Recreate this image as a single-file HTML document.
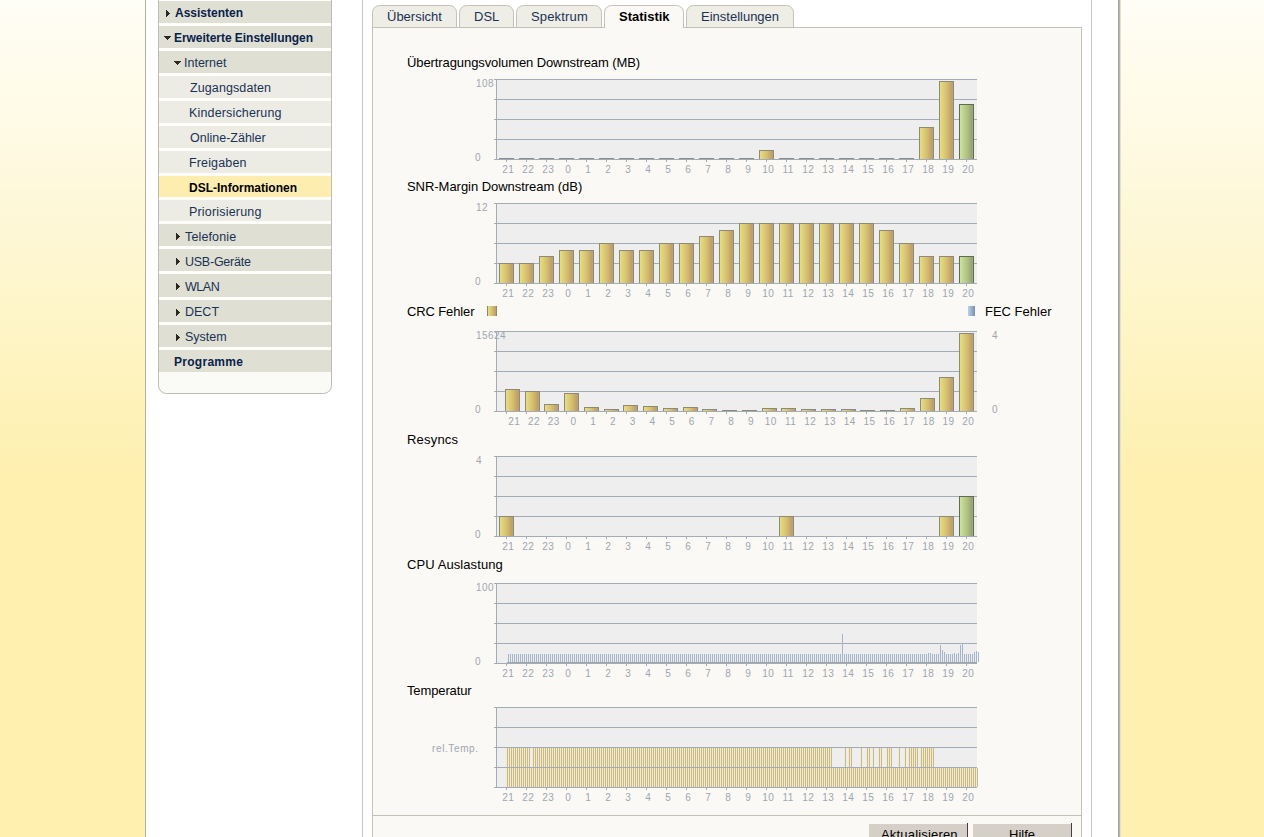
<!DOCTYPE html>
<html><head><meta charset="utf-8"><style>
html,body{margin:0;padding:0;width:1264px;height:837px;overflow:hidden;}
body{background:linear-gradient(to bottom,#fffef6 0px,#fef8da 200px,#fef3bc 390px,#fff0b0 470px,#fff0b0 837px);font-family:'Liberation Sans', sans-serif;}
svg{position:absolute;left:0;top:0;font-family:'Liberation Sans', sans-serif;}
</style></head><body>
<svg width="1264" height="837" viewBox="0 0 1264 837" shape-rendering="crispEdges">
<defs><linearGradient id="gy" x1="0" x2="1" y1="0" y2="0"><stop offset="0" stop-color="#e7de80"/><stop offset="0.55" stop-color="#d3bd70"/><stop offset="0.88" stop-color="#c2a066"/><stop offset="1" stop-color="#b6a482"/></linearGradient><linearGradient id="gg" x1="0" x2="1" y1="0" y2="0"><stop offset="0" stop-color="#cde39c"/><stop offset="0.6" stop-color="#afbe84"/><stop offset="0.9" stop-color="#98a46e"/><stop offset="1" stop-color="#a0ac8c"/></linearGradient><linearGradient id="gb" x1="0" x2="1" y1="0" y2="0"><stop offset="0" stop-color="#bcd0ea"/><stop offset="1" stop-color="#7890b4"/></linearGradient><pattern id="pt" x="0" y="0" width="2" height="10" patternUnits="userSpaceOnUse"><rect x="0" y="0" width="2" height="10" fill="#f6edc6"/><rect x="1" y="0" width="1" height="10" fill="#c6b98f"/></pattern></defs>
<rect x="145" y="0" width="975" height="837" fill="#ffffff"/>
<rect x="145" y="0" width="1" height="837" fill="#b4b09e"/>
<rect x="1118" y="0" width="1" height="837" fill="#a2a29e"/>
<rect x="1119" y="0" width="1" height="837" fill="#b6b6ac"/>
<rect x="1120" y="0" width="1" height="837" fill="#e6e0c8"/>
<path shape-rendering="geometricPrecision" d="M158.5,-5 L158.5,385.5 A8,8 0 0 0 166.5,393.5 L323.5,393.5 A8,8 0 0 0 331.5,385.5 L331.5,-5" fill="#fafaf6" stroke="#bcbcb4" stroke-width="1"/>
<rect x="159" y="0" width="172" height="375" fill="#fefefa"/>
<rect x="159" y="1" width="172" height="22" fill="#e0dfd3"/>
<rect x="159" y="26" width="172" height="22" fill="#e0dfd3"/>
<rect x="159" y="51" width="172" height="22" fill="#e0dfd3"/>
<rect x="159" y="76" width="172" height="22" fill="#ecebe4"/>
<rect x="159" y="101" width="172" height="22" fill="#ecebe4"/>
<rect x="159" y="126" width="172" height="22" fill="#ecebe4"/>
<rect x="159" y="151" width="172" height="22" fill="#ecebe4"/>
<rect x="159" y="176" width="172" height="21" fill="#fdeeb0"/>
<rect x="159" y="200" width="172" height="21" fill="#ecebe4"/>
<rect x="159" y="224" width="172" height="22" fill="#e0dfd3"/>
<rect x="159" y="249" width="172" height="22" fill="#e0dfd3"/>
<rect x="159" y="274" width="172" height="23" fill="#e0dfd3"/>
<rect x="159" y="300" width="172" height="22" fill="#e0dfd3"/>
<rect x="159" y="325" width="172" height="22" fill="#e0dfd3"/>
<rect x="159" y="350" width="172" height="22" fill="#e0dfd3"/>
<rect x="159" y="372" width="172" height="12" fill="#fafaf6"/>
<path d="M166,10 L170,13.5 L166,17 Z" fill="#2a2a22"/>
<text x="175" y="17" font-size="12" font-weight="bold" fill="#08224a" textLength="68.03" lengthAdjust="spacing">Assistenten</text>
<path d="M164,36 L171,36 L167.5,40 Z" fill="#2a2a22"/>
<text x="174" y="42" font-size="12" font-weight="bold" fill="#08224a" textLength="139.0" lengthAdjust="spacing">Erweiterte Einstellungen</text>
<path d="M174,61 L181,61 L177.5,65 Z" fill="#2a2a22"/>
<text x="184" y="67" font-size="12.5" fill="#1a3254" textLength="42.39" lengthAdjust="spacing">Internet</text>
<text x="190" y="92" font-size="12.5" fill="#1a3254" textLength="81.03" lengthAdjust="spacing">Zugangsdaten</text>
<text x="189" y="117" font-size="12.5" fill="#1a3254" textLength="92.49" lengthAdjust="spacing">Kindersicherung</text>
<text x="190" y="142" font-size="12.5" fill="#1a3254" textLength="75.73" lengthAdjust="spacing">Online-Zähler</text>
<text x="189" y="167" font-size="12.5" fill="#1a3254" textLength="57.42" lengthAdjust="spacing">Freigaben</text>
<text x="189" y="192" font-size="12" font-weight="bold" fill="#000000" textLength="108.0" lengthAdjust="spacing">DSL-Informationen</text>
<text x="189" y="216" font-size="12.5" fill="#1a3254" textLength="72.34" lengthAdjust="spacing">Priorisierung</text>
<path d="M176,233 L180,236.5 L176,240 Z" fill="#2a2a22"/>
<text x="185" y="241" font-size="12.5" fill="#1a3254" textLength="51.17" lengthAdjust="spacing">Telefonie</text>
<path d="M176,258 L180,261.5 L176,265 Z" fill="#2a2a22"/>
<text x="185" y="266" font-size="12.5" fill="#1a3254" textLength="65.87" lengthAdjust="spacing">USB-Geräte</text>
<path d="M176,283 L180,286.5 L176,290 Z" fill="#2a2a22"/>
<text x="185" y="291" font-size="12.5" fill="#1a3254" textLength="34.79" lengthAdjust="spacing">WLAN</text>
<path d="M176,309 L180,312.5 L176,316 Z" fill="#2a2a22"/>
<text x="185" y="316" font-size="12.5" fill="#1a3254" textLength="34.03" lengthAdjust="spacing">DECT</text>
<path d="M176,334 L180,337.5 L176,341 Z" fill="#2a2a22"/>
<text x="185" y="341" font-size="12.5" fill="#1a3254" textLength="41.69" lengthAdjust="spacing">System</text>
<text x="174" y="366" font-size="12" font-weight="bold" fill="#08224a" textLength="68.95" lengthAdjust="spacing">Programme</text>
<rect x="362" y="0" width="1" height="837" fill="#c8c8c4"/>
<rect x="1091" y="0" width="1" height="837" fill="#c8c8c4"/>
<rect x="372.5" y="27.5" width="709" height="900" fill="#faf9f5" stroke="#c4c2b8" stroke-width="1"/>
<rect x="373" y="815" width="708" height="1" fill="#c4c2b8"/>
<path shape-rendering="geometricPrecision" d="M372.5,28 L372.5,12.5 A7,7 0 0 1 379.5,5.5 L449.5,5.5 A7,7 0 0 1 456.5,12.5 L456.5,28" fill="#eeede6" stroke="#c4c2b8" stroke-width="1"/>
<text x="387" y="21" font-size="13" fill="#1a3254" textLength="54.92" lengthAdjust="spacing">Übersicht</text>
<path shape-rendering="geometricPrecision" d="M459.5,28 L459.5,12.5 A7,7 0 0 1 466.5,5.5 L506.5,5.5 A7,7 0 0 1 513.5,12.5 L513.5,28" fill="#eeede6" stroke="#c4c2b8" stroke-width="1"/>
<text x="474" y="21" font-size="13" fill="#1a3254" textLength="25.3" lengthAdjust="spacing">DSL</text>
<path shape-rendering="geometricPrecision" d="M516.5,28 L516.5,12.5 A7,7 0 0 1 523.5,5.5 L594.5,5.5 A7,7 0 0 1 601.5,12.5 L601.5,28" fill="#eeede6" stroke="#c4c2b8" stroke-width="1"/>
<text x="531" y="21" font-size="13" fill="#1a3254" textLength="56.78" lengthAdjust="spacing">Spektrum</text>
<path shape-rendering="geometricPrecision" d="M604.5,28 L604.5,12.5 A7,7 0 0 1 611.5,5.5 L676.5,5.5 A7,7 0 0 1 683.5,12.5 L683.5,28" fill="#faf9f5" stroke="#c4c2b8" stroke-width="1"/>
<text x="619" y="21" font-size="13" font-weight="bold" fill="#000" textLength="50.58" lengthAdjust="spacing">Statistik</text>
<path shape-rendering="geometricPrecision" d="M686.5,28 L686.5,12.5 A7,7 0 0 1 693.5,5.5 L786.5,5.5 A7,7 0 0 1 793.5,12.5 L793.5,28" fill="#eeede6" stroke="#c4c2b8" stroke-width="1"/>
<text x="701" y="21" font-size="13" fill="#1a3254" textLength="78.06" lengthAdjust="spacing">Einstellungen</text>
<rect x="373" y="27" width="231" height="1" fill="#c4c2b8"/>
<rect x="684" y="27" width="397" height="1" fill="#c4c2b8"/>
<rect x="605" y="28" width="78" height="3" fill="#faf9f5"/>
<text x="407" y="67" font-size="13" fill="#000" textLength="233.18" lengthAdjust="spacing">Übertragungsvolumen Downstream (MB)</text>
<rect x="497" y="80" width="480" height="79" fill="#eeeeee"/>
<rect x="494" y="79" width="483" height="1" fill="#a2abb6"/>
<rect x="494" y="99" width="483" height="1" fill="#a2abb6"/>
<rect x="494" y="119" width="483" height="1" fill="#a2abb6"/>
<rect x="494" y="139" width="483" height="1" fill="#a2abb6"/>
<rect x="494" y="159" width="483" height="1" fill="#a2abb6"/>
<rect x="496" y="79" width="1" height="81" fill="#a2abb6"/>
<rect x="506" y="160" width="1" height="2" fill="#a2abb6"/>
<rect x="526" y="160" width="1" height="2" fill="#a2abb6"/>
<rect x="546" y="160" width="1" height="2" fill="#a2abb6"/>
<rect x="566" y="160" width="1" height="2" fill="#a2abb6"/>
<rect x="586" y="160" width="1" height="2" fill="#a2abb6"/>
<rect x="606" y="160" width="1" height="2" fill="#a2abb6"/>
<rect x="626" y="160" width="1" height="2" fill="#a2abb6"/>
<rect x="646" y="160" width="1" height="2" fill="#a2abb6"/>
<rect x="666" y="160" width="1" height="2" fill="#a2abb6"/>
<rect x="686" y="160" width="1" height="2" fill="#a2abb6"/>
<rect x="706" y="160" width="1" height="2" fill="#a2abb6"/>
<rect x="726" y="160" width="1" height="2" fill="#a2abb6"/>
<rect x="746" y="160" width="1" height="2" fill="#a2abb6"/>
<rect x="766" y="160" width="1" height="2" fill="#a2abb6"/>
<rect x="786" y="160" width="1" height="2" fill="#a2abb6"/>
<rect x="806" y="160" width="1" height="2" fill="#a2abb6"/>
<rect x="826" y="160" width="1" height="2" fill="#a2abb6"/>
<rect x="846" y="160" width="1" height="2" fill="#a2abb6"/>
<rect x="866" y="160" width="1" height="2" fill="#a2abb6"/>
<rect x="886" y="160" width="1" height="2" fill="#a2abb6"/>
<rect x="906" y="160" width="1" height="2" fill="#a2abb6"/>
<rect x="926" y="160" width="1" height="2" fill="#a2abb6"/>
<rect x="946" y="160" width="1" height="2" fill="#a2abb6"/>
<rect x="966" y="160" width="1" height="2" fill="#a2abb6"/>
<text x="508.22" y="173" font-size="10" fill="#9ea6b2" text-anchor="middle" letter-spacing="0.45">21</text>
<text x="528.22" y="173" font-size="10" fill="#9ea6b2" text-anchor="middle" letter-spacing="0.45">22</text>
<text x="548.22" y="173" font-size="10" fill="#9ea6b2" text-anchor="middle" letter-spacing="0.45">23</text>
<text x="568.22" y="173" font-size="10" fill="#9ea6b2" text-anchor="middle" letter-spacing="0.45">0</text>
<text x="588.22" y="173" font-size="10" fill="#9ea6b2" text-anchor="middle" letter-spacing="0.45">1</text>
<text x="608.22" y="173" font-size="10" fill="#9ea6b2" text-anchor="middle" letter-spacing="0.45">2</text>
<text x="628.22" y="173" font-size="10" fill="#9ea6b2" text-anchor="middle" letter-spacing="0.45">3</text>
<text x="648.22" y="173" font-size="10" fill="#9ea6b2" text-anchor="middle" letter-spacing="0.45">4</text>
<text x="668.22" y="173" font-size="10" fill="#9ea6b2" text-anchor="middle" letter-spacing="0.45">5</text>
<text x="688.22" y="173" font-size="10" fill="#9ea6b2" text-anchor="middle" letter-spacing="0.45">6</text>
<text x="708.22" y="173" font-size="10" fill="#9ea6b2" text-anchor="middle" letter-spacing="0.45">7</text>
<text x="728.22" y="173" font-size="10" fill="#9ea6b2" text-anchor="middle" letter-spacing="0.45">8</text>
<text x="748.22" y="173" font-size="10" fill="#9ea6b2" text-anchor="middle" letter-spacing="0.45">9</text>
<text x="768.22" y="173" font-size="10" fill="#9ea6b2" text-anchor="middle" letter-spacing="0.45">10</text>
<text x="788.22" y="173" font-size="10" fill="#9ea6b2" text-anchor="middle" letter-spacing="0.45">11</text>
<text x="808.22" y="173" font-size="10" fill="#9ea6b2" text-anchor="middle" letter-spacing="0.45">12</text>
<text x="828.22" y="173" font-size="10" fill="#9ea6b2" text-anchor="middle" letter-spacing="0.45">13</text>
<text x="848.22" y="173" font-size="10" fill="#9ea6b2" text-anchor="middle" letter-spacing="0.45">14</text>
<text x="868.22" y="173" font-size="10" fill="#9ea6b2" text-anchor="middle" letter-spacing="0.45">15</text>
<text x="888.22" y="173" font-size="10" fill="#9ea6b2" text-anchor="middle" letter-spacing="0.45">16</text>
<text x="908.22" y="173" font-size="10" fill="#9ea6b2" text-anchor="middle" letter-spacing="0.45">17</text>
<text x="928.22" y="173" font-size="10" fill="#9ea6b2" text-anchor="middle" letter-spacing="0.45">18</text>
<text x="948.22" y="173" font-size="10" fill="#9ea6b2" text-anchor="middle" letter-spacing="0.45">19</text>
<text x="968.22" y="173" font-size="10" fill="#9ea6b2" text-anchor="middle" letter-spacing="0.45">20</text>
<text x="476" y="87" font-size="10" fill="#9ea6b2" letter-spacing="0.45">108</text>
<text x="475" y="161" font-size="10" fill="#9ea6b2">0</text>
<rect x="499" y="158" width="15" height="1" fill="#8a8d90"/>
<rect x="519" y="158" width="15" height="1" fill="#8a8d90"/>
<rect x="539" y="158" width="15" height="1" fill="#8a8d90"/>
<rect x="559" y="158" width="15" height="1" fill="#8a8d90"/>
<rect x="579" y="158" width="15" height="1" fill="#8a8d90"/>
<rect x="599" y="158" width="15" height="1" fill="#8a8d90"/>
<rect x="619" y="158" width="15" height="1" fill="#8a8d90"/>
<rect x="639" y="158" width="15" height="1" fill="#8a8d90"/>
<rect x="659" y="158" width="15" height="1" fill="#8a8d90"/>
<rect x="679" y="158" width="15" height="1" fill="#8a8d90"/>
<rect x="699" y="158" width="15" height="1" fill="#8a8d90"/>
<rect x="719" y="158" width="15" height="1" fill="#8a8d90"/>
<rect x="739" y="158" width="15" height="1" fill="#8a8d90"/>
<rect x="759" y="150" width="15" height="9" fill="#8c8b78"/>
<rect x="760" y="151" width="13" height="8" fill="url(#gy)"/>
<rect x="779" y="158" width="15" height="1" fill="#8a8d90"/>
<rect x="799" y="158" width="15" height="1" fill="#8a8d90"/>
<rect x="819" y="158" width="15" height="1" fill="#8a8d90"/>
<rect x="839" y="158" width="15" height="1" fill="#8a8d90"/>
<rect x="859" y="158" width="15" height="1" fill="#8a8d90"/>
<rect x="879" y="158" width="15" height="1" fill="#8a8d90"/>
<rect x="899" y="158" width="15" height="1" fill="#8a8d90"/>
<rect x="919" y="127" width="15" height="32" fill="#8c8b78"/>
<rect x="920" y="128" width="13" height="31" fill="url(#gy)"/>
<rect x="939" y="81" width="15" height="78" fill="#8c8b78"/>
<rect x="940" y="82" width="13" height="77" fill="url(#gy)"/>
<rect x="959" y="104" width="15" height="55" fill="#5e6c54"/>
<rect x="960" y="105" width="13" height="54" fill="url(#gg)"/>
<text x="407" y="191" font-size="13" fill="#000" textLength="175.23" lengthAdjust="spacing">SNR-Margin Downstream (dB)</text>
<rect x="497" y="204" width="480" height="79" fill="#eeeeee"/>
<rect x="494" y="203" width="483" height="1" fill="#a2abb6"/>
<rect x="494" y="223" width="483" height="1" fill="#a2abb6"/>
<rect x="494" y="243" width="483" height="1" fill="#a2abb6"/>
<rect x="494" y="263" width="483" height="1" fill="#a2abb6"/>
<rect x="494" y="283" width="483" height="1" fill="#a2abb6"/>
<rect x="496" y="203" width="1" height="81" fill="#a2abb6"/>
<rect x="506" y="284" width="1" height="2" fill="#a2abb6"/>
<rect x="526" y="284" width="1" height="2" fill="#a2abb6"/>
<rect x="546" y="284" width="1" height="2" fill="#a2abb6"/>
<rect x="566" y="284" width="1" height="2" fill="#a2abb6"/>
<rect x="586" y="284" width="1" height="2" fill="#a2abb6"/>
<rect x="606" y="284" width="1" height="2" fill="#a2abb6"/>
<rect x="626" y="284" width="1" height="2" fill="#a2abb6"/>
<rect x="646" y="284" width="1" height="2" fill="#a2abb6"/>
<rect x="666" y="284" width="1" height="2" fill="#a2abb6"/>
<rect x="686" y="284" width="1" height="2" fill="#a2abb6"/>
<rect x="706" y="284" width="1" height="2" fill="#a2abb6"/>
<rect x="726" y="284" width="1" height="2" fill="#a2abb6"/>
<rect x="746" y="284" width="1" height="2" fill="#a2abb6"/>
<rect x="766" y="284" width="1" height="2" fill="#a2abb6"/>
<rect x="786" y="284" width="1" height="2" fill="#a2abb6"/>
<rect x="806" y="284" width="1" height="2" fill="#a2abb6"/>
<rect x="826" y="284" width="1" height="2" fill="#a2abb6"/>
<rect x="846" y="284" width="1" height="2" fill="#a2abb6"/>
<rect x="866" y="284" width="1" height="2" fill="#a2abb6"/>
<rect x="886" y="284" width="1" height="2" fill="#a2abb6"/>
<rect x="906" y="284" width="1" height="2" fill="#a2abb6"/>
<rect x="926" y="284" width="1" height="2" fill="#a2abb6"/>
<rect x="946" y="284" width="1" height="2" fill="#a2abb6"/>
<rect x="966" y="284" width="1" height="2" fill="#a2abb6"/>
<text x="508.22" y="297" font-size="10" fill="#9ea6b2" text-anchor="middle" letter-spacing="0.45">21</text>
<text x="528.22" y="297" font-size="10" fill="#9ea6b2" text-anchor="middle" letter-spacing="0.45">22</text>
<text x="548.22" y="297" font-size="10" fill="#9ea6b2" text-anchor="middle" letter-spacing="0.45">23</text>
<text x="568.22" y="297" font-size="10" fill="#9ea6b2" text-anchor="middle" letter-spacing="0.45">0</text>
<text x="588.22" y="297" font-size="10" fill="#9ea6b2" text-anchor="middle" letter-spacing="0.45">1</text>
<text x="608.22" y="297" font-size="10" fill="#9ea6b2" text-anchor="middle" letter-spacing="0.45">2</text>
<text x="628.22" y="297" font-size="10" fill="#9ea6b2" text-anchor="middle" letter-spacing="0.45">3</text>
<text x="648.22" y="297" font-size="10" fill="#9ea6b2" text-anchor="middle" letter-spacing="0.45">4</text>
<text x="668.22" y="297" font-size="10" fill="#9ea6b2" text-anchor="middle" letter-spacing="0.45">5</text>
<text x="688.22" y="297" font-size="10" fill="#9ea6b2" text-anchor="middle" letter-spacing="0.45">6</text>
<text x="708.22" y="297" font-size="10" fill="#9ea6b2" text-anchor="middle" letter-spacing="0.45">7</text>
<text x="728.22" y="297" font-size="10" fill="#9ea6b2" text-anchor="middle" letter-spacing="0.45">8</text>
<text x="748.22" y="297" font-size="10" fill="#9ea6b2" text-anchor="middle" letter-spacing="0.45">9</text>
<text x="768.22" y="297" font-size="10" fill="#9ea6b2" text-anchor="middle" letter-spacing="0.45">10</text>
<text x="788.22" y="297" font-size="10" fill="#9ea6b2" text-anchor="middle" letter-spacing="0.45">11</text>
<text x="808.22" y="297" font-size="10" fill="#9ea6b2" text-anchor="middle" letter-spacing="0.45">12</text>
<text x="828.22" y="297" font-size="10" fill="#9ea6b2" text-anchor="middle" letter-spacing="0.45">13</text>
<text x="848.22" y="297" font-size="10" fill="#9ea6b2" text-anchor="middle" letter-spacing="0.45">14</text>
<text x="868.22" y="297" font-size="10" fill="#9ea6b2" text-anchor="middle" letter-spacing="0.45">15</text>
<text x="888.22" y="297" font-size="10" fill="#9ea6b2" text-anchor="middle" letter-spacing="0.45">16</text>
<text x="908.22" y="297" font-size="10" fill="#9ea6b2" text-anchor="middle" letter-spacing="0.45">17</text>
<text x="928.22" y="297" font-size="10" fill="#9ea6b2" text-anchor="middle" letter-spacing="0.45">18</text>
<text x="948.22" y="297" font-size="10" fill="#9ea6b2" text-anchor="middle" letter-spacing="0.45">19</text>
<text x="968.22" y="297" font-size="10" fill="#9ea6b2" text-anchor="middle" letter-spacing="0.45">20</text>
<text x="476" y="211" font-size="10" fill="#9ea6b2" letter-spacing="0.45">12</text>
<text x="475" y="285" font-size="10" fill="#9ea6b2">0</text>
<rect x="499" y="263" width="15" height="20" fill="#8c8b78"/>
<rect x="500" y="264" width="13" height="19" fill="url(#gy)"/>
<rect x="519" y="263" width="15" height="20" fill="#8c8b78"/>
<rect x="520" y="264" width="13" height="19" fill="url(#gy)"/>
<rect x="539" y="256" width="15" height="27" fill="#8c8b78"/>
<rect x="540" y="257" width="13" height="26" fill="url(#gy)"/>
<rect x="559" y="250" width="15" height="33" fill="#8c8b78"/>
<rect x="560" y="251" width="13" height="32" fill="url(#gy)"/>
<rect x="579" y="250" width="15" height="33" fill="#8c8b78"/>
<rect x="580" y="251" width="13" height="32" fill="url(#gy)"/>
<rect x="599" y="243" width="15" height="40" fill="#8c8b78"/>
<rect x="600" y="244" width="13" height="39" fill="url(#gy)"/>
<rect x="619" y="250" width="15" height="33" fill="#8c8b78"/>
<rect x="620" y="251" width="13" height="32" fill="url(#gy)"/>
<rect x="639" y="250" width="15" height="33" fill="#8c8b78"/>
<rect x="640" y="251" width="13" height="32" fill="url(#gy)"/>
<rect x="659" y="243" width="15" height="40" fill="#8c8b78"/>
<rect x="660" y="244" width="13" height="39" fill="url(#gy)"/>
<rect x="679" y="243" width="15" height="40" fill="#8c8b78"/>
<rect x="680" y="244" width="13" height="39" fill="url(#gy)"/>
<rect x="699" y="236" width="15" height="47" fill="#8c8b78"/>
<rect x="700" y="237" width="13" height="46" fill="url(#gy)"/>
<rect x="719" y="230" width="15" height="53" fill="#8c8b78"/>
<rect x="720" y="231" width="13" height="52" fill="url(#gy)"/>
<rect x="739" y="223" width="15" height="60" fill="#8c8b78"/>
<rect x="740" y="224" width="13" height="59" fill="url(#gy)"/>
<rect x="759" y="223" width="15" height="60" fill="#8c8b78"/>
<rect x="760" y="224" width="13" height="59" fill="url(#gy)"/>
<rect x="779" y="223" width="15" height="60" fill="#8c8b78"/>
<rect x="780" y="224" width="13" height="59" fill="url(#gy)"/>
<rect x="799" y="223" width="15" height="60" fill="#8c8b78"/>
<rect x="800" y="224" width="13" height="59" fill="url(#gy)"/>
<rect x="819" y="223" width="15" height="60" fill="#8c8b78"/>
<rect x="820" y="224" width="13" height="59" fill="url(#gy)"/>
<rect x="839" y="223" width="15" height="60" fill="#8c8b78"/>
<rect x="840" y="224" width="13" height="59" fill="url(#gy)"/>
<rect x="859" y="223" width="15" height="60" fill="#8c8b78"/>
<rect x="860" y="224" width="13" height="59" fill="url(#gy)"/>
<rect x="879" y="230" width="15" height="53" fill="#8c8b78"/>
<rect x="880" y="231" width="13" height="52" fill="url(#gy)"/>
<rect x="899" y="243" width="15" height="40" fill="#8c8b78"/>
<rect x="900" y="244" width="13" height="39" fill="url(#gy)"/>
<rect x="919" y="256" width="15" height="27" fill="#8c8b78"/>
<rect x="920" y="257" width="13" height="26" fill="url(#gy)"/>
<rect x="939" y="256" width="15" height="27" fill="#8c8b78"/>
<rect x="940" y="257" width="13" height="26" fill="url(#gy)"/>
<rect x="959" y="256" width="15" height="27" fill="#5e6c54"/>
<rect x="960" y="257" width="13" height="26" fill="url(#gg)"/>
<text x="407" y="316" font-size="13" fill="#000" textLength="67.51" lengthAdjust="spacing">CRC Fehler</text>
<rect x="487" y="306" width="10" height="10" fill="#8c8b70"/><rect x="488" y="306" width="8" height="10" fill="url(#gy)"/>
<rect x="968" y="306" width="7" height="10" fill="url(#gb)"/>
<text x="985" y="316" font-size="13" fill="#000" textLength="66.47" lengthAdjust="spacing">FEC Fehler</text>
<rect x="497" y="332" width="480" height="79" fill="#eeeeee"/>
<rect x="494" y="331" width="483" height="1" fill="#a2abb6"/>
<rect x="494" y="351" width="483" height="1" fill="#a2abb6"/>
<rect x="494" y="371" width="483" height="1" fill="#a2abb6"/>
<rect x="494" y="391" width="483" height="1" fill="#a2abb6"/>
<rect x="494" y="411" width="483" height="1" fill="#a2abb6"/>
<rect x="496" y="331" width="1" height="81" fill="#a2abb6"/>
<rect x="506" y="412" width="1" height="2" fill="#a2abb6"/>
<rect x="526" y="412" width="1" height="2" fill="#a2abb6"/>
<rect x="546" y="412" width="1" height="2" fill="#a2abb6"/>
<rect x="566" y="412" width="1" height="2" fill="#a2abb6"/>
<rect x="586" y="412" width="1" height="2" fill="#a2abb6"/>
<rect x="606" y="412" width="1" height="2" fill="#a2abb6"/>
<rect x="626" y="412" width="1" height="2" fill="#a2abb6"/>
<rect x="646" y="412" width="1" height="2" fill="#a2abb6"/>
<rect x="666" y="412" width="1" height="2" fill="#a2abb6"/>
<rect x="686" y="412" width="1" height="2" fill="#a2abb6"/>
<rect x="706" y="412" width="1" height="2" fill="#a2abb6"/>
<rect x="726" y="412" width="1" height="2" fill="#a2abb6"/>
<rect x="746" y="412" width="1" height="2" fill="#a2abb6"/>
<rect x="766" y="412" width="1" height="2" fill="#a2abb6"/>
<rect x="786" y="412" width="1" height="2" fill="#a2abb6"/>
<rect x="806" y="412" width="1" height="2" fill="#a2abb6"/>
<rect x="826" y="412" width="1" height="2" fill="#a2abb6"/>
<rect x="846" y="412" width="1" height="2" fill="#a2abb6"/>
<rect x="866" y="412" width="1" height="2" fill="#a2abb6"/>
<rect x="886" y="412" width="1" height="2" fill="#a2abb6"/>
<rect x="906" y="412" width="1" height="2" fill="#a2abb6"/>
<rect x="926" y="412" width="1" height="2" fill="#a2abb6"/>
<rect x="946" y="412" width="1" height="2" fill="#a2abb6"/>
<rect x="966" y="412" width="1" height="2" fill="#a2abb6"/>
<text x="514.22" y="425" font-size="10" fill="#9ea6b2" text-anchor="middle" letter-spacing="0.45">21</text>
<text x="533.96" y="425" font-size="10" fill="#9ea6b2" text-anchor="middle" letter-spacing="0.45">22</text>
<text x="553.70" y="425" font-size="10" fill="#9ea6b2" text-anchor="middle" letter-spacing="0.45">23</text>
<text x="573.44" y="425" font-size="10" fill="#9ea6b2" text-anchor="middle" letter-spacing="0.45">0</text>
<text x="593.18" y="425" font-size="10" fill="#9ea6b2" text-anchor="middle" letter-spacing="0.45">1</text>
<text x="612.92" y="425" font-size="10" fill="#9ea6b2" text-anchor="middle" letter-spacing="0.45">2</text>
<text x="632.66" y="425" font-size="10" fill="#9ea6b2" text-anchor="middle" letter-spacing="0.45">3</text>
<text x="652.40" y="425" font-size="10" fill="#9ea6b2" text-anchor="middle" letter-spacing="0.45">4</text>
<text x="672.14" y="425" font-size="10" fill="#9ea6b2" text-anchor="middle" letter-spacing="0.45">5</text>
<text x="691.88" y="425" font-size="10" fill="#9ea6b2" text-anchor="middle" letter-spacing="0.45">6</text>
<text x="711.62" y="425" font-size="10" fill="#9ea6b2" text-anchor="middle" letter-spacing="0.45">7</text>
<text x="731.36" y="425" font-size="10" fill="#9ea6b2" text-anchor="middle" letter-spacing="0.45">8</text>
<text x="751.10" y="425" font-size="10" fill="#9ea6b2" text-anchor="middle" letter-spacing="0.45">9</text>
<text x="770.84" y="425" font-size="10" fill="#9ea6b2" text-anchor="middle" letter-spacing="0.45">10</text>
<text x="790.58" y="425" font-size="10" fill="#9ea6b2" text-anchor="middle" letter-spacing="0.45">11</text>
<text x="810.32" y="425" font-size="10" fill="#9ea6b2" text-anchor="middle" letter-spacing="0.45">12</text>
<text x="830.06" y="425" font-size="10" fill="#9ea6b2" text-anchor="middle" letter-spacing="0.45">13</text>
<text x="849.80" y="425" font-size="10" fill="#9ea6b2" text-anchor="middle" letter-spacing="0.45">14</text>
<text x="869.54" y="425" font-size="10" fill="#9ea6b2" text-anchor="middle" letter-spacing="0.45">15</text>
<text x="889.28" y="425" font-size="10" fill="#9ea6b2" text-anchor="middle" letter-spacing="0.45">16</text>
<text x="909.02" y="425" font-size="10" fill="#9ea6b2" text-anchor="middle" letter-spacing="0.45">17</text>
<text x="928.76" y="425" font-size="10" fill="#9ea6b2" text-anchor="middle" letter-spacing="0.45">18</text>
<text x="948.50" y="425" font-size="10" fill="#9ea6b2" text-anchor="middle" letter-spacing="0.45">19</text>
<text x="968.24" y="425" font-size="10" fill="#9ea6b2" text-anchor="middle" letter-spacing="0.45">20</text>
<rect x="505" y="389" width="15" height="22" fill="#8c8b78"/>
<rect x="506" y="390" width="13" height="21" fill="url(#gy)"/>
<rect x="525" y="391" width="15" height="20" fill="#8c8b78"/>
<rect x="526" y="392" width="13" height="19" fill="url(#gy)"/>
<rect x="544" y="404" width="15" height="7" fill="#8c8b78"/>
<rect x="545" y="405" width="13" height="6" fill="url(#gy)"/>
<rect x="564" y="393" width="15" height="18" fill="#8c8b78"/>
<rect x="565" y="394" width="13" height="17" fill="url(#gy)"/>
<rect x="584" y="407" width="15" height="4" fill="#8c8b78"/>
<rect x="585" y="408" width="13" height="3" fill="url(#gy)"/>
<rect x="604" y="409" width="15" height="2" fill="#8c8b78"/>
<rect x="605" y="410" width="13" height="1" fill="url(#gy)"/>
<rect x="623" y="405" width="15" height="6" fill="#8c8b78"/>
<rect x="624" y="406" width="13" height="5" fill="url(#gy)"/>
<rect x="643" y="406" width="15" height="5" fill="#8c8b78"/>
<rect x="644" y="407" width="13" height="4" fill="url(#gy)"/>
<rect x="663" y="408" width="15" height="3" fill="#8c8b78"/>
<rect x="664" y="409" width="13" height="2" fill="url(#gy)"/>
<rect x="683" y="407" width="15" height="4" fill="#8c8b78"/>
<rect x="684" y="408" width="13" height="3" fill="url(#gy)"/>
<rect x="702" y="409" width="15" height="2" fill="#8c8b78"/>
<rect x="703" y="410" width="13" height="1" fill="url(#gy)"/>
<rect x="722" y="410" width="15" height="1" fill="#8c8b78"/>
<rect x="742" y="410" width="15" height="1" fill="#8c8b78"/>
<rect x="762" y="408" width="15" height="3" fill="#8c8b78"/>
<rect x="763" y="409" width="13" height="2" fill="url(#gy)"/>
<rect x="781" y="408" width="15" height="3" fill="#8c8b78"/>
<rect x="782" y="409" width="13" height="2" fill="url(#gy)"/>
<rect x="801" y="409" width="15" height="2" fill="#8c8b78"/>
<rect x="802" y="410" width="13" height="1" fill="url(#gy)"/>
<rect x="821" y="409" width="15" height="2" fill="#8c8b78"/>
<rect x="822" y="410" width="13" height="1" fill="url(#gy)"/>
<rect x="841" y="409" width="15" height="2" fill="#8c8b78"/>
<rect x="842" y="410" width="13" height="1" fill="url(#gy)"/>
<rect x="860" y="410" width="15" height="1" fill="#8c8b78"/>
<rect x="880" y="410" width="15" height="1" fill="#8c8b78"/>
<rect x="900" y="408" width="15" height="3" fill="#8c8b78"/>
<rect x="901" y="409" width="13" height="2" fill="url(#gy)"/>
<rect x="920" y="398" width="15" height="13" fill="#8c8b78"/>
<rect x="921" y="399" width="13" height="12" fill="url(#gy)"/>
<rect x="939" y="377" width="15" height="34" fill="#8c8b78"/>
<rect x="940" y="378" width="13" height="33" fill="url(#gy)"/>
<rect x="959" y="333" width="15" height="78" fill="#8c8b78"/>
<rect x="960" y="334" width="13" height="77" fill="url(#gy)"/>
<text x="476" y="339" font-size="10" fill="#9ea6b2" letter-spacing="0.45">15624</text>
<text x="475" y="413" font-size="10" fill="#9ea6b2">0</text>
<text x="992" y="339" font-size="10" fill="#9ea6b2">4</text>
<text x="992" y="413" font-size="10" fill="#9ea6b2">0</text>
<rect x="496" y="331" width="1" height="81" fill="#a2abb6"/>
<text x="407" y="444" font-size="13" fill="#000" textLength="51.03" lengthAdjust="spacing">Resyncs</text>
<rect x="497" y="457" width="480" height="79" fill="#eeeeee"/>
<rect x="494" y="456" width="483" height="1" fill="#a2abb6"/>
<rect x="494" y="476" width="483" height="1" fill="#a2abb6"/>
<rect x="494" y="496" width="483" height="1" fill="#a2abb6"/>
<rect x="494" y="516" width="483" height="1" fill="#a2abb6"/>
<rect x="494" y="536" width="483" height="1" fill="#a2abb6"/>
<rect x="496" y="456" width="1" height="81" fill="#a2abb6"/>
<rect x="506" y="537" width="1" height="2" fill="#a2abb6"/>
<rect x="526" y="537" width="1" height="2" fill="#a2abb6"/>
<rect x="546" y="537" width="1" height="2" fill="#a2abb6"/>
<rect x="566" y="537" width="1" height="2" fill="#a2abb6"/>
<rect x="586" y="537" width="1" height="2" fill="#a2abb6"/>
<rect x="606" y="537" width="1" height="2" fill="#a2abb6"/>
<rect x="626" y="537" width="1" height="2" fill="#a2abb6"/>
<rect x="646" y="537" width="1" height="2" fill="#a2abb6"/>
<rect x="666" y="537" width="1" height="2" fill="#a2abb6"/>
<rect x="686" y="537" width="1" height="2" fill="#a2abb6"/>
<rect x="706" y="537" width="1" height="2" fill="#a2abb6"/>
<rect x="726" y="537" width="1" height="2" fill="#a2abb6"/>
<rect x="746" y="537" width="1" height="2" fill="#a2abb6"/>
<rect x="766" y="537" width="1" height="2" fill="#a2abb6"/>
<rect x="786" y="537" width="1" height="2" fill="#a2abb6"/>
<rect x="806" y="537" width="1" height="2" fill="#a2abb6"/>
<rect x="826" y="537" width="1" height="2" fill="#a2abb6"/>
<rect x="846" y="537" width="1" height="2" fill="#a2abb6"/>
<rect x="866" y="537" width="1" height="2" fill="#a2abb6"/>
<rect x="886" y="537" width="1" height="2" fill="#a2abb6"/>
<rect x="906" y="537" width="1" height="2" fill="#a2abb6"/>
<rect x="926" y="537" width="1" height="2" fill="#a2abb6"/>
<rect x="946" y="537" width="1" height="2" fill="#a2abb6"/>
<rect x="966" y="537" width="1" height="2" fill="#a2abb6"/>
<text x="508.22" y="550" font-size="10" fill="#9ea6b2" text-anchor="middle" letter-spacing="0.45">21</text>
<text x="528.22" y="550" font-size="10" fill="#9ea6b2" text-anchor="middle" letter-spacing="0.45">22</text>
<text x="548.22" y="550" font-size="10" fill="#9ea6b2" text-anchor="middle" letter-spacing="0.45">23</text>
<text x="568.22" y="550" font-size="10" fill="#9ea6b2" text-anchor="middle" letter-spacing="0.45">0</text>
<text x="588.22" y="550" font-size="10" fill="#9ea6b2" text-anchor="middle" letter-spacing="0.45">1</text>
<text x="608.22" y="550" font-size="10" fill="#9ea6b2" text-anchor="middle" letter-spacing="0.45">2</text>
<text x="628.22" y="550" font-size="10" fill="#9ea6b2" text-anchor="middle" letter-spacing="0.45">3</text>
<text x="648.22" y="550" font-size="10" fill="#9ea6b2" text-anchor="middle" letter-spacing="0.45">4</text>
<text x="668.22" y="550" font-size="10" fill="#9ea6b2" text-anchor="middle" letter-spacing="0.45">5</text>
<text x="688.22" y="550" font-size="10" fill="#9ea6b2" text-anchor="middle" letter-spacing="0.45">6</text>
<text x="708.22" y="550" font-size="10" fill="#9ea6b2" text-anchor="middle" letter-spacing="0.45">7</text>
<text x="728.22" y="550" font-size="10" fill="#9ea6b2" text-anchor="middle" letter-spacing="0.45">8</text>
<text x="748.22" y="550" font-size="10" fill="#9ea6b2" text-anchor="middle" letter-spacing="0.45">9</text>
<text x="768.22" y="550" font-size="10" fill="#9ea6b2" text-anchor="middle" letter-spacing="0.45">10</text>
<text x="788.22" y="550" font-size="10" fill="#9ea6b2" text-anchor="middle" letter-spacing="0.45">11</text>
<text x="808.22" y="550" font-size="10" fill="#9ea6b2" text-anchor="middle" letter-spacing="0.45">12</text>
<text x="828.22" y="550" font-size="10" fill="#9ea6b2" text-anchor="middle" letter-spacing="0.45">13</text>
<text x="848.22" y="550" font-size="10" fill="#9ea6b2" text-anchor="middle" letter-spacing="0.45">14</text>
<text x="868.22" y="550" font-size="10" fill="#9ea6b2" text-anchor="middle" letter-spacing="0.45">15</text>
<text x="888.22" y="550" font-size="10" fill="#9ea6b2" text-anchor="middle" letter-spacing="0.45">16</text>
<text x="908.22" y="550" font-size="10" fill="#9ea6b2" text-anchor="middle" letter-spacing="0.45">17</text>
<text x="928.22" y="550" font-size="10" fill="#9ea6b2" text-anchor="middle" letter-spacing="0.45">18</text>
<text x="948.22" y="550" font-size="10" fill="#9ea6b2" text-anchor="middle" letter-spacing="0.45">19</text>
<text x="968.22" y="550" font-size="10" fill="#9ea6b2" text-anchor="middle" letter-spacing="0.45">20</text>
<text x="476" y="464" font-size="10" fill="#9ea6b2" letter-spacing="0.45">4</text>
<text x="475" y="538" font-size="10" fill="#9ea6b2">0</text>
<rect x="499" y="516" width="15" height="20" fill="#8c8b78"/>
<rect x="500" y="517" width="13" height="19" fill="url(#gy)"/>
<rect x="779" y="516" width="15" height="20" fill="#8c8b78"/>
<rect x="780" y="517" width="13" height="19" fill="url(#gy)"/>
<rect x="939" y="516" width="15" height="20" fill="#8c8b78"/>
<rect x="940" y="517" width="13" height="19" fill="url(#gy)"/>
<rect x="959" y="496" width="15" height="40" fill="#5e6c54"/>
<rect x="960" y="497" width="13" height="39" fill="url(#gg)"/>
<text x="407" y="569" font-size="13" fill="#000" textLength="95.75" lengthAdjust="spacing">CPU Auslastung</text>
<rect x="497" y="584" width="480" height="79" fill="#eeeeee"/>
<rect x="494" y="583" width="483" height="1" fill="#a2abb6"/>
<rect x="494" y="603" width="483" height="1" fill="#a2abb6"/>
<rect x="494" y="623" width="483" height="1" fill="#a2abb6"/>
<rect x="494" y="643" width="483" height="1" fill="#a2abb6"/>
<rect x="494" y="663" width="483" height="1" fill="#a2abb6"/>
<rect x="496" y="583" width="1" height="81" fill="#a2abb6"/>
<rect x="506" y="664" width="1" height="2" fill="#a2abb6"/>
<rect x="526" y="664" width="1" height="2" fill="#a2abb6"/>
<rect x="546" y="664" width="1" height="2" fill="#a2abb6"/>
<rect x="566" y="664" width="1" height="2" fill="#a2abb6"/>
<rect x="586" y="664" width="1" height="2" fill="#a2abb6"/>
<rect x="606" y="664" width="1" height="2" fill="#a2abb6"/>
<rect x="626" y="664" width="1" height="2" fill="#a2abb6"/>
<rect x="646" y="664" width="1" height="2" fill="#a2abb6"/>
<rect x="666" y="664" width="1" height="2" fill="#a2abb6"/>
<rect x="686" y="664" width="1" height="2" fill="#a2abb6"/>
<rect x="706" y="664" width="1" height="2" fill="#a2abb6"/>
<rect x="726" y="664" width="1" height="2" fill="#a2abb6"/>
<rect x="746" y="664" width="1" height="2" fill="#a2abb6"/>
<rect x="766" y="664" width="1" height="2" fill="#a2abb6"/>
<rect x="786" y="664" width="1" height="2" fill="#a2abb6"/>
<rect x="806" y="664" width="1" height="2" fill="#a2abb6"/>
<rect x="826" y="664" width="1" height="2" fill="#a2abb6"/>
<rect x="846" y="664" width="1" height="2" fill="#a2abb6"/>
<rect x="866" y="664" width="1" height="2" fill="#a2abb6"/>
<rect x="886" y="664" width="1" height="2" fill="#a2abb6"/>
<rect x="906" y="664" width="1" height="2" fill="#a2abb6"/>
<rect x="926" y="664" width="1" height="2" fill="#a2abb6"/>
<rect x="946" y="664" width="1" height="2" fill="#a2abb6"/>
<rect x="966" y="664" width="1" height="2" fill="#a2abb6"/>
<text x="508.22" y="677" font-size="10" fill="#9ea6b2" text-anchor="middle" letter-spacing="0.45">21</text>
<text x="528.22" y="677" font-size="10" fill="#9ea6b2" text-anchor="middle" letter-spacing="0.45">22</text>
<text x="548.22" y="677" font-size="10" fill="#9ea6b2" text-anchor="middle" letter-spacing="0.45">23</text>
<text x="568.22" y="677" font-size="10" fill="#9ea6b2" text-anchor="middle" letter-spacing="0.45">0</text>
<text x="588.22" y="677" font-size="10" fill="#9ea6b2" text-anchor="middle" letter-spacing="0.45">1</text>
<text x="608.22" y="677" font-size="10" fill="#9ea6b2" text-anchor="middle" letter-spacing="0.45">2</text>
<text x="628.22" y="677" font-size="10" fill="#9ea6b2" text-anchor="middle" letter-spacing="0.45">3</text>
<text x="648.22" y="677" font-size="10" fill="#9ea6b2" text-anchor="middle" letter-spacing="0.45">4</text>
<text x="668.22" y="677" font-size="10" fill="#9ea6b2" text-anchor="middle" letter-spacing="0.45">5</text>
<text x="688.22" y="677" font-size="10" fill="#9ea6b2" text-anchor="middle" letter-spacing="0.45">6</text>
<text x="708.22" y="677" font-size="10" fill="#9ea6b2" text-anchor="middle" letter-spacing="0.45">7</text>
<text x="728.22" y="677" font-size="10" fill="#9ea6b2" text-anchor="middle" letter-spacing="0.45">8</text>
<text x="748.22" y="677" font-size="10" fill="#9ea6b2" text-anchor="middle" letter-spacing="0.45">9</text>
<text x="768.22" y="677" font-size="10" fill="#9ea6b2" text-anchor="middle" letter-spacing="0.45">10</text>
<text x="788.22" y="677" font-size="10" fill="#9ea6b2" text-anchor="middle" letter-spacing="0.45">11</text>
<text x="808.22" y="677" font-size="10" fill="#9ea6b2" text-anchor="middle" letter-spacing="0.45">12</text>
<text x="828.22" y="677" font-size="10" fill="#9ea6b2" text-anchor="middle" letter-spacing="0.45">13</text>
<text x="848.22" y="677" font-size="10" fill="#9ea6b2" text-anchor="middle" letter-spacing="0.45">14</text>
<text x="868.22" y="677" font-size="10" fill="#9ea6b2" text-anchor="middle" letter-spacing="0.45">15</text>
<text x="888.22" y="677" font-size="10" fill="#9ea6b2" text-anchor="middle" letter-spacing="0.45">16</text>
<text x="908.22" y="677" font-size="10" fill="#9ea6b2" text-anchor="middle" letter-spacing="0.45">17</text>
<text x="928.22" y="677" font-size="10" fill="#9ea6b2" text-anchor="middle" letter-spacing="0.45">18</text>
<text x="948.22" y="677" font-size="10" fill="#9ea6b2" text-anchor="middle" letter-spacing="0.45">19</text>
<text x="968.22" y="677" font-size="10" fill="#9ea6b2" text-anchor="middle" letter-spacing="0.45">20</text>
<text x="476" y="591" font-size="10" fill="#9ea6b2" letter-spacing="0.45">100</text>
<text x="475" y="665" font-size="10" fill="#9ea6b2">0</text>
<rect x="507" y="662" width="470" height="1" fill="#9aa8aa"/>
<rect x="508" y="654" width="1" height="8" fill="#a3b5cb"/>
<rect x="510" y="654" width="1" height="8" fill="#a3b5cb"/>
<rect x="512" y="654" width="1" height="8" fill="#a3b5cb"/>
<rect x="514" y="654" width="1" height="8" fill="#a3b5cb"/>
<rect x="516" y="654" width="1" height="8" fill="#a3b5cb"/>
<rect x="518" y="654" width="1" height="8" fill="#a3b5cb"/>
<rect x="520" y="654" width="1" height="8" fill="#a3b5cb"/>
<rect x="522" y="654" width="1" height="8" fill="#a3b5cb"/>
<rect x="524" y="654" width="1" height="8" fill="#a3b5cb"/>
<rect x="526" y="654" width="1" height="8" fill="#a3b5cb"/>
<rect x="528" y="654" width="1" height="8" fill="#a3b5cb"/>
<rect x="530" y="654" width="1" height="8" fill="#a3b5cb"/>
<rect x="532" y="654" width="1" height="8" fill="#a3b5cb"/>
<rect x="534" y="654" width="1" height="8" fill="#a3b5cb"/>
<rect x="536" y="654" width="1" height="8" fill="#a3b5cb"/>
<rect x="538" y="654" width="1" height="8" fill="#a3b5cb"/>
<rect x="540" y="654" width="1" height="8" fill="#a3b5cb"/>
<rect x="542" y="654" width="1" height="8" fill="#a3b5cb"/>
<rect x="544" y="654" width="1" height="8" fill="#a3b5cb"/>
<rect x="546" y="654" width="1" height="8" fill="#a3b5cb"/>
<rect x="548" y="654" width="1" height="8" fill="#a3b5cb"/>
<rect x="550" y="654" width="1" height="8" fill="#a3b5cb"/>
<rect x="552" y="654" width="1" height="8" fill="#a3b5cb"/>
<rect x="554" y="654" width="1" height="8" fill="#a3b5cb"/>
<rect x="556" y="654" width="1" height="8" fill="#a3b5cb"/>
<rect x="558" y="654" width="1" height="8" fill="#a3b5cb"/>
<rect x="560" y="654" width="1" height="8" fill="#a3b5cb"/>
<rect x="562" y="654" width="1" height="8" fill="#a3b5cb"/>
<rect x="564" y="654" width="1" height="8" fill="#a3b5cb"/>
<rect x="566" y="654" width="1" height="8" fill="#a3b5cb"/>
<rect x="568" y="654" width="1" height="8" fill="#a3b5cb"/>
<rect x="570" y="654" width="1" height="8" fill="#a3b5cb"/>
<rect x="572" y="654" width="1" height="8" fill="#a3b5cb"/>
<rect x="574" y="654" width="1" height="8" fill="#a3b5cb"/>
<rect x="576" y="654" width="1" height="8" fill="#a3b5cb"/>
<rect x="578" y="654" width="1" height="8" fill="#a3b5cb"/>
<rect x="580" y="654" width="1" height="8" fill="#a3b5cb"/>
<rect x="582" y="654" width="1" height="8" fill="#a3b5cb"/>
<rect x="584" y="654" width="1" height="8" fill="#a3b5cb"/>
<rect x="586" y="654" width="1" height="8" fill="#a3b5cb"/>
<rect x="588" y="654" width="1" height="8" fill="#a3b5cb"/>
<rect x="590" y="654" width="1" height="8" fill="#a3b5cb"/>
<rect x="592" y="654" width="1" height="8" fill="#a3b5cb"/>
<rect x="594" y="654" width="1" height="8" fill="#a3b5cb"/>
<rect x="596" y="654" width="1" height="8" fill="#a3b5cb"/>
<rect x="598" y="654" width="1" height="8" fill="#a3b5cb"/>
<rect x="600" y="654" width="1" height="8" fill="#a3b5cb"/>
<rect x="602" y="654" width="1" height="8" fill="#a3b5cb"/>
<rect x="604" y="654" width="1" height="8" fill="#a3b5cb"/>
<rect x="606" y="654" width="1" height="8" fill="#a3b5cb"/>
<rect x="608" y="654" width="1" height="8" fill="#a3b5cb"/>
<rect x="610" y="654" width="1" height="8" fill="#a3b5cb"/>
<rect x="612" y="654" width="1" height="8" fill="#a3b5cb"/>
<rect x="614" y="654" width="1" height="8" fill="#a3b5cb"/>
<rect x="616" y="654" width="1" height="8" fill="#a3b5cb"/>
<rect x="618" y="654" width="1" height="8" fill="#a3b5cb"/>
<rect x="620" y="654" width="1" height="8" fill="#a3b5cb"/>
<rect x="622" y="654" width="1" height="8" fill="#a3b5cb"/>
<rect x="624" y="654" width="1" height="8" fill="#a3b5cb"/>
<rect x="626" y="654" width="1" height="8" fill="#a3b5cb"/>
<rect x="628" y="654" width="1" height="8" fill="#a3b5cb"/>
<rect x="630" y="654" width="1" height="8" fill="#a3b5cb"/>
<rect x="632" y="654" width="1" height="8" fill="#a3b5cb"/>
<rect x="634" y="654" width="1" height="8" fill="#a3b5cb"/>
<rect x="636" y="654" width="1" height="8" fill="#a3b5cb"/>
<rect x="638" y="654" width="1" height="8" fill="#a3b5cb"/>
<rect x="640" y="654" width="1" height="8" fill="#a3b5cb"/>
<rect x="642" y="654" width="1" height="8" fill="#a3b5cb"/>
<rect x="644" y="654" width="1" height="8" fill="#a3b5cb"/>
<rect x="646" y="654" width="1" height="8" fill="#a3b5cb"/>
<rect x="648" y="654" width="1" height="8" fill="#a3b5cb"/>
<rect x="650" y="654" width="1" height="8" fill="#a3b5cb"/>
<rect x="652" y="654" width="1" height="8" fill="#a3b5cb"/>
<rect x="654" y="654" width="1" height="8" fill="#a3b5cb"/>
<rect x="656" y="654" width="1" height="8" fill="#a3b5cb"/>
<rect x="658" y="654" width="1" height="8" fill="#a3b5cb"/>
<rect x="660" y="654" width="1" height="8" fill="#a3b5cb"/>
<rect x="662" y="654" width="1" height="8" fill="#a3b5cb"/>
<rect x="664" y="654" width="1" height="8" fill="#a3b5cb"/>
<rect x="666" y="654" width="1" height="8" fill="#a3b5cb"/>
<rect x="668" y="654" width="1" height="8" fill="#a3b5cb"/>
<rect x="670" y="654" width="1" height="8" fill="#a3b5cb"/>
<rect x="672" y="654" width="1" height="8" fill="#a3b5cb"/>
<rect x="674" y="654" width="1" height="8" fill="#a3b5cb"/>
<rect x="676" y="654" width="1" height="8" fill="#a3b5cb"/>
<rect x="678" y="654" width="1" height="8" fill="#a3b5cb"/>
<rect x="680" y="654" width="1" height="8" fill="#a3b5cb"/>
<rect x="682" y="654" width="1" height="8" fill="#a3b5cb"/>
<rect x="684" y="654" width="1" height="8" fill="#a3b5cb"/>
<rect x="686" y="654" width="1" height="8" fill="#a3b5cb"/>
<rect x="688" y="654" width="1" height="8" fill="#a3b5cb"/>
<rect x="690" y="654" width="1" height="8" fill="#a3b5cb"/>
<rect x="692" y="654" width="1" height="8" fill="#a3b5cb"/>
<rect x="694" y="654" width="1" height="8" fill="#a3b5cb"/>
<rect x="696" y="654" width="1" height="8" fill="#a3b5cb"/>
<rect x="698" y="654" width="1" height="8" fill="#a3b5cb"/>
<rect x="700" y="654" width="1" height="8" fill="#a3b5cb"/>
<rect x="702" y="654" width="1" height="8" fill="#a3b5cb"/>
<rect x="704" y="654" width="1" height="8" fill="#a3b5cb"/>
<rect x="706" y="654" width="1" height="8" fill="#a3b5cb"/>
<rect x="708" y="654" width="1" height="8" fill="#a3b5cb"/>
<rect x="710" y="654" width="1" height="8" fill="#a3b5cb"/>
<rect x="712" y="654" width="1" height="8" fill="#a3b5cb"/>
<rect x="714" y="654" width="1" height="8" fill="#a3b5cb"/>
<rect x="716" y="654" width="1" height="8" fill="#a3b5cb"/>
<rect x="718" y="654" width="1" height="8" fill="#a3b5cb"/>
<rect x="720" y="654" width="1" height="8" fill="#a3b5cb"/>
<rect x="722" y="654" width="1" height="8" fill="#a3b5cb"/>
<rect x="724" y="654" width="1" height="8" fill="#a3b5cb"/>
<rect x="726" y="654" width="1" height="8" fill="#a3b5cb"/>
<rect x="728" y="654" width="1" height="8" fill="#a3b5cb"/>
<rect x="730" y="654" width="1" height="8" fill="#a3b5cb"/>
<rect x="732" y="654" width="1" height="8" fill="#a3b5cb"/>
<rect x="734" y="654" width="1" height="8" fill="#a3b5cb"/>
<rect x="736" y="654" width="1" height="8" fill="#a3b5cb"/>
<rect x="738" y="654" width="1" height="8" fill="#a3b5cb"/>
<rect x="740" y="654" width="1" height="8" fill="#a3b5cb"/>
<rect x="742" y="654" width="1" height="8" fill="#a3b5cb"/>
<rect x="744" y="654" width="1" height="8" fill="#a3b5cb"/>
<rect x="746" y="654" width="1" height="8" fill="#a3b5cb"/>
<rect x="748" y="654" width="1" height="8" fill="#a3b5cb"/>
<rect x="750" y="654" width="1" height="8" fill="#a3b5cb"/>
<rect x="752" y="654" width="1" height="8" fill="#a3b5cb"/>
<rect x="754" y="654" width="1" height="8" fill="#a3b5cb"/>
<rect x="756" y="654" width="1" height="8" fill="#a3b5cb"/>
<rect x="758" y="654" width="1" height="8" fill="#a3b5cb"/>
<rect x="760" y="654" width="1" height="8" fill="#a3b5cb"/>
<rect x="762" y="654" width="1" height="8" fill="#a3b5cb"/>
<rect x="764" y="654" width="1" height="8" fill="#a3b5cb"/>
<rect x="766" y="654" width="1" height="8" fill="#a3b5cb"/>
<rect x="768" y="654" width="1" height="8" fill="#a3b5cb"/>
<rect x="770" y="654" width="1" height="8" fill="#a3b5cb"/>
<rect x="772" y="654" width="1" height="8" fill="#a3b5cb"/>
<rect x="774" y="654" width="1" height="8" fill="#a3b5cb"/>
<rect x="776" y="654" width="1" height="8" fill="#a3b5cb"/>
<rect x="778" y="654" width="1" height="8" fill="#a3b5cb"/>
<rect x="780" y="654" width="1" height="8" fill="#a3b5cb"/>
<rect x="782" y="654" width="1" height="8" fill="#a3b5cb"/>
<rect x="784" y="654" width="1" height="8" fill="#a3b5cb"/>
<rect x="786" y="654" width="1" height="8" fill="#a3b5cb"/>
<rect x="788" y="654" width="1" height="8" fill="#a3b5cb"/>
<rect x="790" y="654" width="1" height="8" fill="#a3b5cb"/>
<rect x="792" y="654" width="1" height="8" fill="#a3b5cb"/>
<rect x="794" y="654" width="1" height="8" fill="#a3b5cb"/>
<rect x="796" y="654" width="1" height="8" fill="#a3b5cb"/>
<rect x="798" y="654" width="1" height="8" fill="#a3b5cb"/>
<rect x="800" y="654" width="1" height="8" fill="#a3b5cb"/>
<rect x="802" y="654" width="1" height="8" fill="#a3b5cb"/>
<rect x="804" y="654" width="1" height="8" fill="#a3b5cb"/>
<rect x="806" y="654" width="1" height="8" fill="#a3b5cb"/>
<rect x="808" y="654" width="1" height="8" fill="#a3b5cb"/>
<rect x="810" y="654" width="1" height="8" fill="#a3b5cb"/>
<rect x="812" y="654" width="1" height="8" fill="#a3b5cb"/>
<rect x="814" y="654" width="1" height="8" fill="#a3b5cb"/>
<rect x="816" y="654" width="1" height="8" fill="#a3b5cb"/>
<rect x="818" y="654" width="1" height="8" fill="#a3b5cb"/>
<rect x="820" y="654" width="1" height="8" fill="#a3b5cb"/>
<rect x="822" y="654" width="1" height="8" fill="#a3b5cb"/>
<rect x="824" y="654" width="1" height="8" fill="#a3b5cb"/>
<rect x="826" y="654" width="1" height="8" fill="#a3b5cb"/>
<rect x="828" y="654" width="1" height="8" fill="#a3b5cb"/>
<rect x="830" y="654" width="1" height="8" fill="#a3b5cb"/>
<rect x="832" y="654" width="1" height="8" fill="#a3b5cb"/>
<rect x="834" y="654" width="1" height="8" fill="#a3b5cb"/>
<rect x="836" y="654" width="1" height="8" fill="#a3b5cb"/>
<rect x="838" y="654" width="1" height="8" fill="#a3b5cb"/>
<rect x="840" y="654" width="1" height="8" fill="#a3b5cb"/>
<rect x="842" y="634" width="1" height="28" fill="#a3b5cb"/>
<rect x="844" y="654" width="1" height="8" fill="#a3b5cb"/>
<rect x="846" y="654" width="1" height="8" fill="#a3b5cb"/>
<rect x="848" y="654" width="1" height="8" fill="#a3b5cb"/>
<rect x="850" y="654" width="1" height="8" fill="#a3b5cb"/>
<rect x="852" y="654" width="1" height="8" fill="#a3b5cb"/>
<rect x="854" y="654" width="1" height="8" fill="#a3b5cb"/>
<rect x="856" y="654" width="1" height="8" fill="#a3b5cb"/>
<rect x="858" y="654" width="1" height="8" fill="#a3b5cb"/>
<rect x="860" y="654" width="1" height="8" fill="#a3b5cb"/>
<rect x="862" y="654" width="1" height="8" fill="#a3b5cb"/>
<rect x="864" y="654" width="1" height="8" fill="#a3b5cb"/>
<rect x="866" y="654" width="1" height="8" fill="#a3b5cb"/>
<rect x="868" y="654" width="1" height="8" fill="#a3b5cb"/>
<rect x="870" y="654" width="1" height="8" fill="#a3b5cb"/>
<rect x="872" y="654" width="1" height="8" fill="#a3b5cb"/>
<rect x="874" y="654" width="1" height="8" fill="#a3b5cb"/>
<rect x="876" y="654" width="1" height="8" fill="#a3b5cb"/>
<rect x="878" y="654" width="1" height="8" fill="#a3b5cb"/>
<rect x="880" y="654" width="1" height="8" fill="#a3b5cb"/>
<rect x="882" y="654" width="1" height="8" fill="#a3b5cb"/>
<rect x="884" y="654" width="1" height="8" fill="#a3b5cb"/>
<rect x="886" y="654" width="1" height="8" fill="#a3b5cb"/>
<rect x="888" y="654" width="1" height="8" fill="#a3b5cb"/>
<rect x="890" y="654" width="1" height="8" fill="#a3b5cb"/>
<rect x="892" y="654" width="1" height="8" fill="#a3b5cb"/>
<rect x="894" y="654" width="1" height="8" fill="#a3b5cb"/>
<rect x="896" y="654" width="1" height="8" fill="#a3b5cb"/>
<rect x="898" y="654" width="1" height="8" fill="#a3b5cb"/>
<rect x="900" y="654" width="1" height="8" fill="#a3b5cb"/>
<rect x="902" y="654" width="1" height="8" fill="#a3b5cb"/>
<rect x="904" y="654" width="1" height="8" fill="#a3b5cb"/>
<rect x="906" y="654" width="1" height="8" fill="#a3b5cb"/>
<rect x="908" y="654" width="1" height="8" fill="#a3b5cb"/>
<rect x="910" y="654" width="1" height="8" fill="#a3b5cb"/>
<rect x="912" y="654" width="1" height="8" fill="#a3b5cb"/>
<rect x="914" y="654" width="1" height="8" fill="#a3b5cb"/>
<rect x="916" y="654" width="1" height="8" fill="#a3b5cb"/>
<rect x="918" y="654" width="1" height="8" fill="#a3b5cb"/>
<rect x="920" y="654" width="1" height="8" fill="#a3b5cb"/>
<rect x="922" y="654" width="1" height="8" fill="#a3b5cb"/>
<rect x="924" y="654" width="1" height="8" fill="#a3b5cb"/>
<rect x="926" y="654" width="1" height="8" fill="#a3b5cb"/>
<rect x="928" y="653" width="1" height="9" fill="#a3b5cb"/>
<rect x="930" y="653" width="1" height="9" fill="#a3b5cb"/>
<rect x="932" y="654" width="1" height="8" fill="#a3b5cb"/>
<rect x="934" y="654" width="1" height="8" fill="#a3b5cb"/>
<rect x="936" y="654" width="1" height="8" fill="#a3b5cb"/>
<rect x="938" y="654" width="1" height="8" fill="#a3b5cb"/>
<rect x="940" y="645" width="1" height="17" fill="#a3b5cb"/>
<rect x="942" y="650" width="1" height="12" fill="#a3b5cb"/>
<rect x="944" y="652" width="1" height="10" fill="#a3b5cb"/>
<rect x="946" y="654" width="1" height="8" fill="#a3b5cb"/>
<rect x="948" y="654" width="1" height="8" fill="#a3b5cb"/>
<rect x="950" y="654" width="1" height="8" fill="#a3b5cb"/>
<rect x="952" y="654" width="1" height="8" fill="#a3b5cb"/>
<rect x="954" y="653" width="1" height="9" fill="#a3b5cb"/>
<rect x="956" y="654" width="1" height="8" fill="#a3b5cb"/>
<rect x="958" y="653" width="1" height="9" fill="#a3b5cb"/>
<rect x="960" y="645" width="1" height="17" fill="#a3b5cb"/>
<rect x="962" y="643" width="1" height="19" fill="#a3b5cb"/>
<rect x="964" y="654" width="1" height="8" fill="#a3b5cb"/>
<rect x="966" y="654" width="1" height="8" fill="#a3b5cb"/>
<rect x="968" y="654" width="1" height="8" fill="#a3b5cb"/>
<rect x="970" y="654" width="1" height="8" fill="#a3b5cb"/>
<rect x="972" y="654" width="1" height="8" fill="#a3b5cb"/>
<rect x="974" y="652" width="1" height="10" fill="#a3b5cb"/>
<rect x="976" y="651" width="1" height="11" fill="#a3b5cb"/>
<rect x="978" y="652" width="1" height="10" fill="#a3b5cb"/>
<text x="407" y="695" font-size="13" fill="#000" textLength="64.64" lengthAdjust="spacing">Temperatur</text>
<rect x="497" y="708" width="480" height="79" fill="#eeeeee"/>
<rect x="494" y="707" width="483" height="1" fill="#a2abb6"/>
<rect x="494" y="727" width="483" height="1" fill="#a2abb6"/>
<rect x="494" y="747" width="483" height="1" fill="#a2abb6"/>
<rect x="494" y="767" width="483" height="1" fill="#a2abb6"/>
<rect x="494" y="787" width="483" height="1" fill="#a2abb6"/>
<rect x="496" y="707" width="1" height="81" fill="#a2abb6"/>
<rect x="506" y="788" width="1" height="2" fill="#a2abb6"/>
<rect x="526" y="788" width="1" height="2" fill="#a2abb6"/>
<rect x="546" y="788" width="1" height="2" fill="#a2abb6"/>
<rect x="566" y="788" width="1" height="2" fill="#a2abb6"/>
<rect x="586" y="788" width="1" height="2" fill="#a2abb6"/>
<rect x="606" y="788" width="1" height="2" fill="#a2abb6"/>
<rect x="626" y="788" width="1" height="2" fill="#a2abb6"/>
<rect x="646" y="788" width="1" height="2" fill="#a2abb6"/>
<rect x="666" y="788" width="1" height="2" fill="#a2abb6"/>
<rect x="686" y="788" width="1" height="2" fill="#a2abb6"/>
<rect x="706" y="788" width="1" height="2" fill="#a2abb6"/>
<rect x="726" y="788" width="1" height="2" fill="#a2abb6"/>
<rect x="746" y="788" width="1" height="2" fill="#a2abb6"/>
<rect x="766" y="788" width="1" height="2" fill="#a2abb6"/>
<rect x="786" y="788" width="1" height="2" fill="#a2abb6"/>
<rect x="806" y="788" width="1" height="2" fill="#a2abb6"/>
<rect x="826" y="788" width="1" height="2" fill="#a2abb6"/>
<rect x="846" y="788" width="1" height="2" fill="#a2abb6"/>
<rect x="866" y="788" width="1" height="2" fill="#a2abb6"/>
<rect x="886" y="788" width="1" height="2" fill="#a2abb6"/>
<rect x="906" y="788" width="1" height="2" fill="#a2abb6"/>
<rect x="926" y="788" width="1" height="2" fill="#a2abb6"/>
<rect x="946" y="788" width="1" height="2" fill="#a2abb6"/>
<rect x="966" y="788" width="1" height="2" fill="#a2abb6"/>
<text x="508.22" y="801" font-size="10" fill="#9ea6b2" text-anchor="middle" letter-spacing="0.45">21</text>
<text x="528.22" y="801" font-size="10" fill="#9ea6b2" text-anchor="middle" letter-spacing="0.45">22</text>
<text x="548.22" y="801" font-size="10" fill="#9ea6b2" text-anchor="middle" letter-spacing="0.45">23</text>
<text x="568.22" y="801" font-size="10" fill="#9ea6b2" text-anchor="middle" letter-spacing="0.45">0</text>
<text x="588.22" y="801" font-size="10" fill="#9ea6b2" text-anchor="middle" letter-spacing="0.45">1</text>
<text x="608.22" y="801" font-size="10" fill="#9ea6b2" text-anchor="middle" letter-spacing="0.45">2</text>
<text x="628.22" y="801" font-size="10" fill="#9ea6b2" text-anchor="middle" letter-spacing="0.45">3</text>
<text x="648.22" y="801" font-size="10" fill="#9ea6b2" text-anchor="middle" letter-spacing="0.45">4</text>
<text x="668.22" y="801" font-size="10" fill="#9ea6b2" text-anchor="middle" letter-spacing="0.45">5</text>
<text x="688.22" y="801" font-size="10" fill="#9ea6b2" text-anchor="middle" letter-spacing="0.45">6</text>
<text x="708.22" y="801" font-size="10" fill="#9ea6b2" text-anchor="middle" letter-spacing="0.45">7</text>
<text x="728.22" y="801" font-size="10" fill="#9ea6b2" text-anchor="middle" letter-spacing="0.45">8</text>
<text x="748.22" y="801" font-size="10" fill="#9ea6b2" text-anchor="middle" letter-spacing="0.45">9</text>
<text x="768.22" y="801" font-size="10" fill="#9ea6b2" text-anchor="middle" letter-spacing="0.45">10</text>
<text x="788.22" y="801" font-size="10" fill="#9ea6b2" text-anchor="middle" letter-spacing="0.45">11</text>
<text x="808.22" y="801" font-size="10" fill="#9ea6b2" text-anchor="middle" letter-spacing="0.45">12</text>
<text x="828.22" y="801" font-size="10" fill="#9ea6b2" text-anchor="middle" letter-spacing="0.45">13</text>
<text x="848.22" y="801" font-size="10" fill="#9ea6b2" text-anchor="middle" letter-spacing="0.45">14</text>
<text x="868.22" y="801" font-size="10" fill="#9ea6b2" text-anchor="middle" letter-spacing="0.45">15</text>
<text x="888.22" y="801" font-size="10" fill="#9ea6b2" text-anchor="middle" letter-spacing="0.45">16</text>
<text x="908.22" y="801" font-size="10" fill="#9ea6b2" text-anchor="middle" letter-spacing="0.45">17</text>
<text x="928.22" y="801" font-size="10" fill="#9ea6b2" text-anchor="middle" letter-spacing="0.45">18</text>
<text x="948.22" y="801" font-size="10" fill="#9ea6b2" text-anchor="middle" letter-spacing="0.45">19</text>
<text x="968.22" y="801" font-size="10" fill="#9ea6b2" text-anchor="middle" letter-spacing="0.45">20</text>
<text x="432" y="752" font-size="10" fill="#9ea6b2" letter-spacing="0.62">rel.Temp.</text>
<rect x="506" y="768" width="472" height="19" fill="url(#pt)"/>
<rect x="506" y="748" width="24" height="19" fill="url(#pt)"/>
<rect x="532" y="748" width="300" height="19" fill="url(#pt)"/>
<rect x="844" y="748" width="2" height="19" fill="url(#pt)"/>
<rect x="848" y="748" width="4" height="19" fill="url(#pt)"/>
<rect x="860" y="748" width="2" height="19" fill="url(#pt)"/>
<rect x="866" y="748" width="4" height="19" fill="url(#pt)"/>
<rect x="872" y="748" width="2" height="19" fill="url(#pt)"/>
<rect x="878" y="748" width="4" height="19" fill="url(#pt)"/>
<rect x="886" y="748" width="6" height="19" fill="url(#pt)"/>
<rect x="898" y="748" width="2" height="19" fill="url(#pt)"/>
<rect x="904" y="748" width="2" height="19" fill="url(#pt)"/>
<rect x="908" y="748" width="10" height="19" fill="url(#pt)"/>
<rect x="920" y="748" width="14" height="19" fill="url(#pt)"/>
<rect x="494" y="767" width="483" height="1" fill="#a2abb6"/>
<rect x="494" y="747" width="483" height="1" fill="#a2abb6"/>
<rect x="869" y="824" width="99" height="20" fill="#d4d0c8"/>
<rect x="967" y="823" width="1" height="20" fill="#404040"/>
<text x="881" y="839" font-size="13" fill="#000" textLength="76.6" lengthAdjust="spacing">Aktualisieren</text>
<rect x="973" y="824" width="99" height="20" fill="#d4d0c8"/>
<rect x="1071" y="823" width="1" height="20" fill="#404040"/>
<text x="1009" y="839" font-size="13" fill="#000" textLength="26.02" lengthAdjust="spacing">Hilfe</text>
</svg>
</body></html>
